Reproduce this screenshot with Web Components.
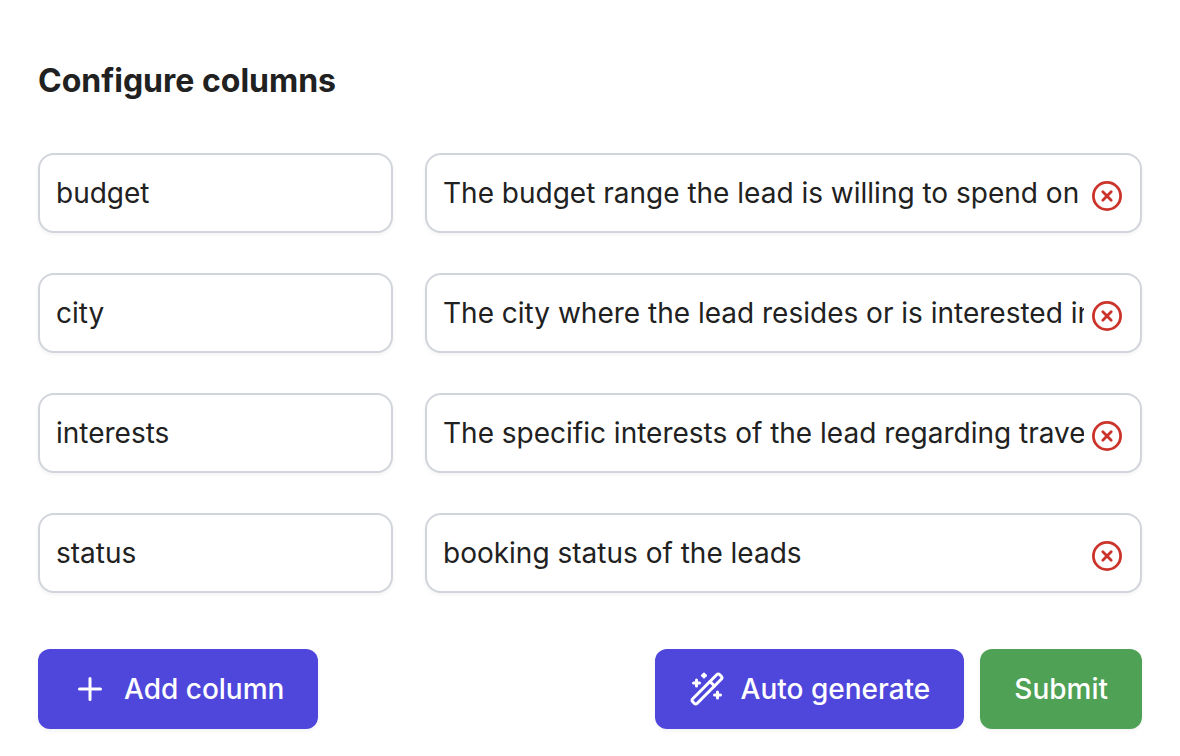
<!DOCTYPE html>
<html lang="en">
<head>
<meta charset="utf-8">
<meta name="viewport" content="width=device-width, initial-scale=1">
<title>Configure columns</title>
<style>
  body { margin: 0; background: #fff; color: #212121; font-family: Inter, sans-serif; font-size: 28px; }
</style>
</head>
<body>
<column-config heading="Configure columns">
  <column-row name="budget" description="The budget range the lead is willing to spend on"></column-row>
  <column-row name="city" description="The city where the lead resides or is interested in"></column-row>
  <column-row name="interests" description="The specific interests of the lead regarding travel"></column-row>
  <column-row name="status" description="booking status of the leads"></column-row>
  <action-button slot="start">
    <svg slot="icon" width="36" height="36" viewBox="0 0 36 36" fill="none" stroke="currentColor" stroke-width="3" stroke-linecap="round" aria-hidden="true"><path d="M18 7.5v21M7.5 18h21"/></svg>
    Add column
  </action-button>
  <action-button slot="end">
    <svg slot="icon" width="36" height="36" viewBox="0 0 24 24" fill="none" stroke="currentColor" stroke-width="2" stroke-linecap="round" stroke-linejoin="round" aria-hidden="true"><path d="m21.64 3.64-1.28-1.28a1.21 1.21 0 0 0-1.72 0L2.36 18.64a1.21 1.21 0 0 0 0 1.72l1.28 1.28a1.2 1.2 0 0 0 1.72 0L21.64 5.36a1.2 1.2 0 0 0 0-1.72Z"/><path d="m14 7 3 3M5 6v4M19 14v4M10 2v2M7 8H3M21 16h-4M11 3H9"/></svg>
    Auto generate
  </action-button>
  <action-button slot="end" variant="success">Submit</action-button>
</column-config>

<script>
class ColumnConfig extends HTMLElement {
  connectedCallback() {
    const root = this.attachShadow({ mode: 'open' });
    root.innerHTML = `
      <style>
        :host { display: block; padding: 61px 38px 27px; }
        h1 { margin: 0 0 52px; font-size: 32px; line-height: 40px; font-weight: 700; }
        .rows { display: grid; gap: 40px; }
        .actions { display: flex; justify-content: space-between; gap: 16px; margin-top: 56px; }
        .group { display: flex; gap: 16px; }
      </style>
      <h1></h1>
      <div class="rows"><slot></slot></div>
      <div class="actions">
        <slot name="start"></slot>
        <div class="group"><slot name="end"></slot></div>
      </div>`;
    root.querySelector('h1').textContent = this.getAttribute('heading');
  }
}

class ColumnRow extends HTMLElement {
  connectedCallback() {
    const root = this.attachShadow({ mode: 'open' });
    root.innerHTML = `
      <style>
        :host { display: grid; grid-template-columns: 355fr 717fr; gap: 32px; }
        .field {
          display: flex; align-items: center; box-sizing: border-box; height: 80px; min-width: 0;
          padding: 0 16px; border: 2px solid #d1d5db; border-radius: 16px; background: #fff;
          box-shadow: 0 2px 4px rgba(0, 0, 0, .05);
        }
        .field:focus-within { border-color: #4f46e5; }
        input {
          flex: 1; min-width: 0; height: 40px; margin: 0; padding: 0; border: 0; outline: 0;
          background: none; color: inherit; font: inherit;
        }
        button {
          display: flex; flex: none; margin: 6px 0 0 6px; padding: 0; border: 0;
          background: none; color: #cb342b; cursor: pointer;
        }
      </style>
      <div class="field"><input type="text" aria-label="Column name"></div>
      <div class="field">
        <input type="text" aria-label="Column description">
        <button type="button" aria-label="Remove column">
          <svg width="34" height="34" viewBox="0 0 34 34" fill="none" stroke="currentColor" stroke-width="2.8" stroke-linecap="round"><circle cx="17" cy="17" r="13.6"/><path d="m12.8 12.8 8.4 8.4M21.2 12.8l-8.4 8.4"/></svg>
        </button>
      </div>`;
    const [name, description] = root.querySelectorAll('input');
    name.value = this.getAttribute('name');
    description.value = this.getAttribute('description');
    root.querySelector('button').addEventListener('click', () => this.remove());
  }
}

class ActionButton extends HTMLElement {
  connectedCallback() {
    const root = this.attachShadow({ mode: 'open' });
    root.innerHTML = `
      <style>
        :host { display: block; --fill: #4f46dc; }
        :host([variant="success"]) { --fill: #4fa155; }
        button {
          display: flex; align-items: center; gap: 16px; height: 80px; margin: 0; padding: 0 34px;
          border: 0; border-radius: 12px; background: var(--fill); color: #fff;
          font: inherit; font-weight: 500; white-space: nowrap; cursor: pointer;
          box-shadow: 0 2px 4px rgba(0, 0, 0, .05);
        }
        ::slotted(svg) { display: block; flex: none; }
      </style>
      <button type="button"><slot name="icon"></slot><span><slot></slot></span></button>`;
  }
}

customElements.define('column-config', ColumnConfig);
customElements.define('column-row', ColumnRow);
customElements.define('action-button', ActionButton);
</script>
</body>
</html>
